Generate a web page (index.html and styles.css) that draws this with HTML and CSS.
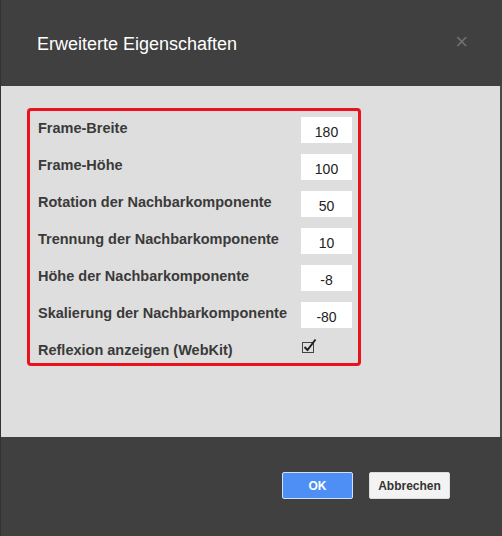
FILE: index.html
```html
<!DOCTYPE html>
<html lang="de">
<head>
  <meta charset="UTF-8">
  <title>Erweiterte Eigenschaften</title>
  <link rel="stylesheet" href="styles.css">
</head>
<body>
  <div class="dialog">
    <header class="dialog-head">
      <h1>Erweiterte Eigenschaften</h1>
      <span class="close">&times;</span>
    </header>

    <main class="dialog-body">
      <div class="props">
        <div class="row">
          <label>Frame-Breite</label>
          <input type="text" value="180">
        </div>
        <div class="row">
          <label>Frame-Höhe</label>
          <input type="text" value="100">
        </div>
        <div class="row">
          <label>Rotation der Nachbarkomponente</label>
          <input type="text" value="50">
        </div>
        <div class="row">
          <label>Trennung der Nachbarkomponente</label>
          <input type="text" value="10">
        </div>
        <div class="row">
          <label>Höhe der Nachbarkomponente</label>
          <input type="text" value="-8">
        </div>
        <div class="row">
          <label>Skalierung der Nachbarkomponente</label>
          <input type="text" value="-80">
        </div>
        <div class="row">
          <label>Reflexion anzeigen (WebKit)</label>
          <span class="check">
            <svg width="18" height="16" viewBox="0 0 18 16">
              <rect x="1.5" y="4.5" width="11" height="10" fill="none" stroke="#444" stroke-width="1"/>
              <path d="M3.5 9 L6.5 12 L14.5 1.5" fill="none" stroke="#222" stroke-width="2"/>
            </svg>
          </span>
        </div>
      </div>
    </main>

    <footer class="dialog-foot">
      <button class="btn btn-ok">OK</button>
      <button class="btn btn-cancel">Abbrechen</button>
    </footer>
  </div>
</body>
</html>
```

FILE: styles.css
```css
body {
  margin: 0;
  padding: 0;
  font-family: 'Liberation Sans', Arial, sans-serif;
  background-color: #3f3f3f;
}

.dialog {
  width: 502px;
  height: 536px;
  display: flex;
  flex-direction: column;
  background-color: #404040;
  border-left: 1px solid #333;
  box-sizing: border-box;
}

.dialog-head {
  height: 86px;
  display: flex;
  align-items: center;
  justify-content: space-between;
  padding: 0 34px 0 36px;
  box-sizing: border-box;
}

.dialog-head h1 {
  margin: 0;
  font-size: 18px;
  font-weight: normal;
  color: #fff;
  padding-top: 2px;
}

.close {
  color: #707070;
  font-size: 22px;
  line-height: 1;
  padding-bottom: 2px;
}

.dialog-body {
  height: 351px;
  background-color: #dedede;
  padding: 22px 0 0 26px;
  box-sizing: border-box;
  border-right: 2px solid #4a4a4a;
}

.props {
  width: 334px;
  height: 258px;
  border: 3px solid #e8131b;
  border-radius: 4px;
  box-sizing: border-box;
  padding: 0 6px 0 8px;
}

.row {
  height: 37px;
  display: flex;
  align-items: center;
  justify-content: space-between;
}

.row label {
  font-size: 14.5px;
  font-weight: bold;
  color: #3a3a3a;
  margin-top: -4px;
}

.row input {
  width: 51px;
  height: 26px;
  box-sizing: border-box;
  border: none;
  background: #fff;
  font-family: 'Liberation Sans', Arial, sans-serif;
  font-size: 14px;
  color: #222;
  text-align: center;
  padding: 4px 0 0 0;
}

.check {
  width: 51px;
  display: flex;
  padding-bottom: 12px;
}

.dialog-foot {
  flex: 1;
  display: flex;
  align-items: flex-start;
  padding: 35px 0 0 281px;
  gap: 16px;
}

.btn {
  height: 27px;
  font-family: 'Liberation Sans', Arial, sans-serif;
  font-size: 12px;
  font-weight: bold;
  border-radius: 2px;
  cursor: pointer;
}

.btn-ok {
  width: 71px;
  background-color: #4d8ff5;
  border: 1px solid #cfe0ff;
  color: #fff;
}

.btn-cancel {
  width: 81px;
  background-color: #f3f3f3;
  border: 1px solid #ddd;
  color: #333;
}
```
